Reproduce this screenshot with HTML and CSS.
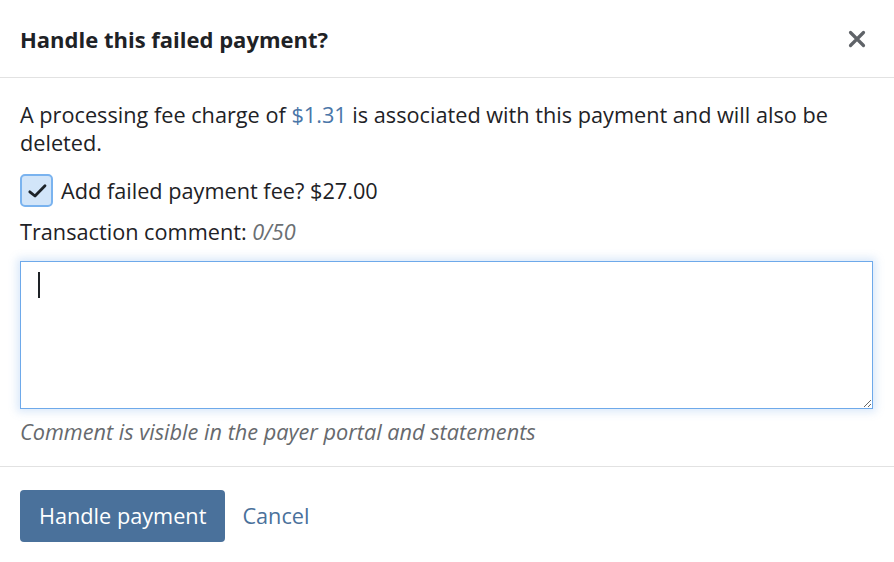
FILE: index.html
```html
<!DOCTYPE html>
<html>
<head>
<meta charset="utf-8">
<link rel="stylesheet" href="styles.css">
</head>
<body>
<div class="modal">
  <div class="modal-header">
    <h2 class="modal-title">Handle this failed payment?</h2>
    <button class="close" aria-label="Close">
      <svg width="18" height="18" viewBox="0 0 18 18"><path d="M2.5 2.5 L15.5 15.5 M15.5 2.5 L2.5 15.5" stroke="#5f6368" stroke-width="3.2" stroke-linecap="round"/></svg>
    </button>
  </div>
  <div class="modal-body">
    <p class="intro">A processing fee charge of <a class="link" href="#">$1.31</a> is associated with this payment and will also be deleted.</p>
    <label class="check-row">
      <span class="checkbox">
        <svg width="20" height="20" viewBox="0 0 20 20"><path d="M2.8 10.8 L8 15 L18 4.8" fill="none" stroke="#1d2329" stroke-width="2.8" stroke-linecap="round" stroke-linejoin="round"/></svg>
      </span>
      <span>Add failed payment fee? $27.00</span>
    </label>
    <div class="field-label">Transaction comment: <em class="count">0/50</em></div>
    <div class="textarea-wrap">
      <textarea class="comment"></textarea>
      <span class="caret"></span>
    </div>
    <div class="hint">Comment is visible in the payer portal and statements</div>
  </div>
  <div class="modal-footer">
    <button class="btn-primary">Handle payment</button>
    <a class="btn-link" href="#">Cancel</a>
  </div>
</div>
</body>
</html>
```
FILE: styles.css
```css
* { box-sizing: border-box; }
html, body { margin: 0; padding: 0; background: #fff; }
body {
  font-family: "Open Sans", "Noto Sans", sans-serif;
  color: #1e2226;
  font-size: 21.7px;
  line-height: 28px;
}
.modal { width: 894px; }
.modal-header {
  height: 78px;
  display: flex;
  align-items: center;
  justify-content: space-between;
  padding: 0 28px 0 20px;
  border-bottom: 1px solid #e2e2e2;
}
.modal-title {
  margin: 0;
  font-size: 22px;
  font-weight: 700;
  line-height: 28px;
}
.close {
  border: 0;
  background: none;
  padding: 0;
  display: flex;
}
.modal-body { padding: 23px 23px 20px 20px; }
.intro { margin: 0; }
.link { color: #4a76a8; text-decoration: none; }
.check-row {
  display: flex;
  align-items: center;
  gap: 8px;
  margin-top: 17px;
}
.checkbox {
  width: 33px;
  height: 33px;
  border: 2.5px solid #7ab3ef;
  background: #d2e5f9;
  border-radius: 5px;
  display: flex;
  align-items: center;
  justify-content: center;
}
.field-label { margin-top: 11px; }
.count { color: #6b6f73; }
.textarea-wrap { position: relative; margin-top: 15px; }
.comment {
  display: block;
  width: 853px;
  height: 148px;
  border: 1px solid #6ea9ea;
  border-radius: 0;
  box-shadow: 0 0 8px 3px rgba(110, 169, 234, 0.25);
  outline: none;
  resize: vertical;
  font: inherit;
}
.caret {
  position: absolute;
  left: 18px;
  top: 11px;
  width: 2px;
  height: 26px;
  background: #1e2226;
}
.hint {
  margin-top: 9px;
  font-style: italic;
  color: #66696d;
}
.modal-footer {
  border-top: 1px solid #e2e2e2;
  padding: 23px 20px;
  display: flex;
  align-items: center;
  gap: 17px;
}
.btn-primary {
  height: 52px;
  padding: 0 19px;
  background: #4a719b;
  color: #fff;
  border: 0;
  border-radius: 4px;
  font: inherit;
}
.btn-link { color: #4a719b; text-decoration: none; }
```
